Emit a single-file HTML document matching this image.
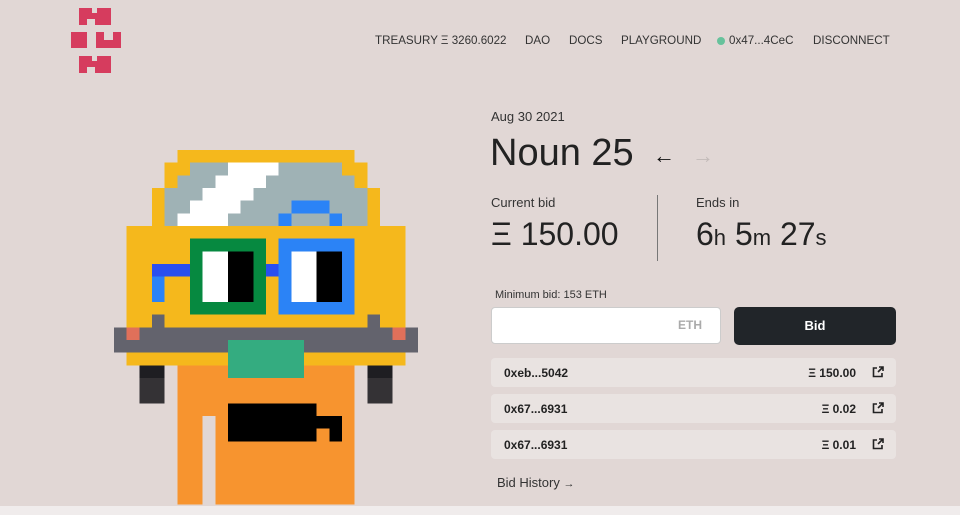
<!DOCTYPE html>
<html><head><meta charset="utf-8"><style>
*{margin:0;padding:0;box-sizing:border-box}
body{width:960px;height:515px;background:#e1d7d5;font-family:"Liberation Sans",sans-serif;color:#222;position:relative;overflow:hidden}
.a{position:absolute;white-space:nowrap}
.nav{top:34px;font-size:11.6px;color:#333}
.row{position:absolute;left:491px;width:405px;height:29px;background:#e9e3e1;border-radius:4px;font-size:12px;font-weight:bold;color:#222}
.row .l{position:absolute;left:13px;top:8px}
.row .r{position:absolute;right:40px;top:8px}
.row svg{position:absolute;right:12px;top:8px}
</style></head><body>
<svg class="a" style="left:0;top:0" width="140" height="80">
<g fill="#d63c5e">
<rect x="79" y="8" width="32" height="17"/><rect x="71" y="32" width="16" height="16"/><rect x="96" y="32" width="25" height="16"/><rect x="79" y="56" width="32" height="17"/>
</g>
<g fill="#e1d7d5">
<rect x="92" y="8" width="5" height="5"/><rect x="87" y="19" width="8" height="6"/><rect x="104" y="32" width="9" height="8"/><rect x="92" y="56" width="5" height="5"/><rect x="87" y="67" width="8" height="6"/>
</g></svg>
<div class="a nav" style="left:375px">TREASURY Ξ 3260.6022</div>
<div class="a nav" style="left:525px">DAO</div>
<div class="a nav" style="left:569px">DOCS</div>
<div class="a nav" style="left:621px">PLAYGROUND</div>
<div class="a" style="left:717px;top:37px;width:8px;height:8px;border-radius:50%;background:#67c29c"></div>
<div class="a nav" style="left:729px">0x47...4CeC</div>
<div class="a nav" style="left:813px">DISCONNECT</div>

<svg class="a" style="left:114px;top:150px" width="316.7" height="354.7" viewBox="0 0 25 28" shape-rendering="crispEdges">
<g fill="#f5b81c">
<rect x="5" y="0" width="14" height="1"/><rect x="4" y="1" width="16" height="2"/><rect x="3" y="3" width="18" height="3"/><rect x="1" y="6" width="22" height="11"/>
</g>
<g fill="#9fb2b5"><rect x="6" y="1" width="12" height="1"/><rect x="5" y="2" width="14" height="1"/><rect x="4" y="3" width="16" height="3"/></g>
<g fill="#fff"><rect x="9" y="1" width="4" height="1"/><rect x="8" y="2" width="4" height="1"/><rect x="7" y="3" width="4" height="1"/><rect x="6" y="4" width="4" height="1"/><rect x="5" y="5" width="4" height="1"/></g>
<g fill="#2b83f6"><rect x="14" y="4" width="3" height="1"/><rect x="13" y="5" width="1" height="1"/><rect x="17" y="5" width="1" height="1"/></g>
<rect x="6" y="7" width="6" height="6" fill="#068940"/>
<rect x="13" y="7" width="6" height="6" fill="#2b83f6"/>
<rect x="7" y="8" width="2" height="4" fill="#fff"/><rect x="9" y="8" width="2" height="4" fill="#000"/>
<rect x="14" y="8" width="2" height="4" fill="#fff"/><rect x="16" y="8" width="2" height="4" fill="#000"/>
<rect x="12" y="9" width="1" height="1" fill="#2a4ff0"/><rect x="3" y="9" width="3" height="1" fill="#2a4ff0"/><rect x="3" y="10" width="1" height="2" fill="#2b83f6"/>
<g fill="#63636d"><rect x="0" y="14" width="24" height="2"/><rect x="3" y="13" width="1" height="1"/><rect x="20" y="13" width="1" height="1"/></g>
<rect x="1" y="14" width="1" height="1" fill="#e0705a"/><rect x="22" y="14" width="1" height="1" fill="#e0705a"/>
<rect x="5" y="17" width="14" height="11" fill="#f7942f"/>
<rect x="7" y="21" width="1" height="7" fill="#e1d7d5"/>
<rect x="9" y="15" width="6" height="3" fill="#34ac80"/>
<g fill="#000"><rect x="9" y="20" width="7" height="3"/><rect x="16" y="21" width="2" height="1"/><rect x="17" y="22" width="1" height="1"/></g>
<g fill="#343235"><rect x="2" y="17" width="2" height="3"/><rect x="20" y="17" width="2" height="3"/></g>
<g fill="#1e1e22"><rect x="2" y="17" width="2" height="1"/><rect x="20" y="17" width="2" height="1"/></g>
</svg>

<div class="a" style="left:491px;top:109px;font-size:13px;color:#333">Aug 30 2021</div>
<div class="a" style="left:490px;top:132px;font-size:38px;color:#222">Noun 25</div>
<div class="a" style="left:653px;top:143px;font-size:22px;color:#111">←</div>
<div class="a" style="left:692px;top:143px;font-size:22px;color:#c3bbb9">→</div>
<div class="a" style="left:491px;top:195px;font-size:13px;color:#333">Current bid</div>
<div class="a" style="left:491px;top:216px;font-size:32px;color:#222">Ξ 150.00</div>
<div class="a" style="left:657px;top:195px;width:1px;height:66px;background:#777"></div>
<div class="a" style="left:696px;top:195px;font-size:13px;color:#333">Ends in</div>
<div class="a" style="left:696px;top:216px;font-size:32px;color:#222">6<span style="font-size:22px">h</span> 5<span style="font-size:22px">m</span> 27<span style="font-size:22px">s</span></div>
<div class="a" style="left:495px;top:289px;font-size:11px;color:#333">Minimum bid: 153 ETH</div>
<div class="a" style="left:491px;top:307px;width:230px;height:37px;background:#fff;border:1px solid #ccc;border-radius:4px"></div>
<div class="a" style="left:678px;top:318px;font-size:12px;font-weight:bold;color:#aaa">ETH</div>
<div class="a" style="left:734px;top:307px;width:162px;height:38px;background:#212529;border-radius:5px;color:#fff;font-size:13px;font-weight:bold;text-align:center;line-height:38px">Bid</div>
<div class="row" style="top:358px"><span class="l">0xeb...5042</span><span class="r">Ξ 150.00</span><svg width="12" height="12" viewBox="0 0 12 12" fill="none" stroke="#222" stroke-width="1.6"><path d="M5 2H1.5v8.5H10V7M6 6l5-5M7 1h4v4"/></svg></div>
<div class="row" style="top:394px"><span class="l">0x67...6931</span><span class="r">Ξ 0.02</span><svg width="12" height="12" viewBox="0 0 12 12" fill="none" stroke="#222" stroke-width="1.6"><path d="M5 2H1.5v8.5H10V7M6 6l5-5M7 1h4v4"/></svg></div>
<div class="row" style="top:430px"><span class="l">0x67...6931</span><span class="r">Ξ 0.01</span><svg width="12" height="12" viewBox="0 0 12 12" fill="none" stroke="#222" stroke-width="1.6"><path d="M5 2H1.5v8.5H10V7M6 6l5-5M7 1h4v4"/></svg></div>
<div class="a" style="left:497px;top:475px;font-size:13px;color:#333">Bid History <span style="font-size:11px">→</span></div>
<div class="a" style="left:0;top:506px;width:960px;height:9px;background:#f0ecec"></div>
</body></html>
